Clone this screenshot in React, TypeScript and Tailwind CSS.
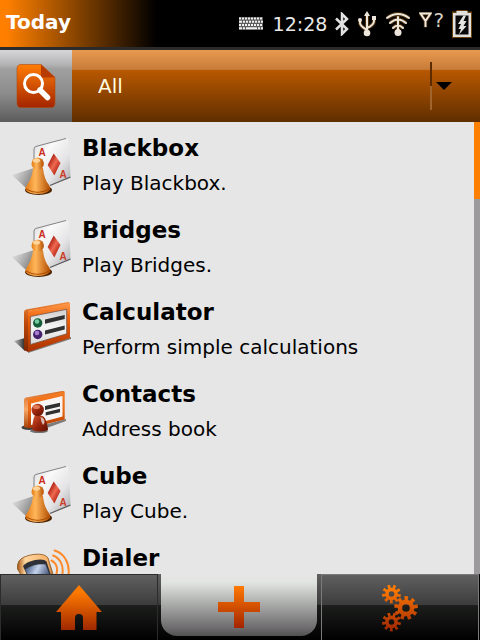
import React from 'react';

interface IconProps {
  className?: string;
}

interface AppEntry {
  name: string;
  description?: string;
  Icon: React.FC<IconProps>;
}

const GamesIcon: React.FC<IconProps> = ({ className }) => (
  <svg viewBox="0 0 64 64" className={className} aria-hidden="true">
    <defs>
      <linearGradient id="games-card" x1="0" y1="0" x2="1" y2="1">
        <stop offset="0" stopColor="#d6d6d8" />
        <stop offset="0.3" stopColor="#fafafa" />
        <stop offset="0.65" stopColor="#e4e4e6" />
        <stop offset="1" stopColor="#a9a9ad" />
      </linearGradient>
      <linearGradient id="games-pawn" x1="0" y1="0" x2="1" y2="0">
        <stop offset="0" stopColor="#e27a14" />
        <stop offset="0.4" stopColor="#ffb65a" />
        <stop offset="1" stopColor="#b14c00" />
      </linearGradient>
      <linearGradient id="games-diamond" x1="0" y1="0" x2="1" y2="1">
        <stop offset="0.2" stopColor="#a81c10" />
        <stop offset="0.5" stopColor="#ee6a50" />
        <stop offset="0.8" stopColor="#b42414" />
      </linearGradient>
      <linearGradient id="games-shadow" x1="0" y1="0" x2="1" y2="0.5">
        <stop offset="0" stopColor="#777" stopOpacity="0" />
        <stop offset="1" stopColor="#555" stopOpacity="0.7" />
      </linearGradient>
    </defs>
    <path d="M2 44L24 37V54L17 58Z" fill="url(#games-shadow)" />
    <path d="M24 18Q24 16 26 15.400L56 7.500Q59 7 59 10L60.500 45Q60.500 47 58 48L40 54L25 52Z" fill="url(#games-card)" />
    <path d="M24 34V18Q24 16 26 15.400L56 7.500" fill="none" stroke="#77777a" strokeWidth="0.900" />
    <path d="M60.500 46L40 54.500" stroke="#55555a" strokeWidth="1.200" />
    <path d="M43.700 22.500L50.500 32L44.300 44.500L37.700 34Z" fill="url(#games-diamond)" />
    <text x="28.500" y="24.500" fontSize="10" fontWeight="700" fontFamily="Liberation Sans, sans-serif" fill="#cb2c18">A</text>
    <text x="49.500" y="47" fontSize="10" fontWeight="700" fontFamily="Liberation Sans, sans-serif" fill="#cb3c28">A</text>
    <ellipse cx="28.500" cy="59" rx="13.500" ry="5" fill="#4a2400" />
    <path d="M23 37H33Q34 48 39 54Q41 57 40 59Q36 63 28 63Q19 63 15.500 59Q15 57 17 54Q22 47 23 37Z" fill="url(#games-pawn)" />
    <path d="M16 58Q28 65 40 57.500" fill="none" stroke="#a44600" strokeWidth="0.900" />
    <circle cx="27.700" cy="32.700" r="6.200" fill="url(#games-pawn)" />
    <ellipse cx="26.500" cy="29.500" rx="3.600" ry="2" fill="#ffe0b0" opacity="0.800" />
  </svg>
);

const CalculatorIcon: React.FC<IconProps> = ({ className }) => (
  <svg viewBox="0 0 64 64" className={className} aria-hidden="true">
    <defs>
      <linearGradient id="calc-frame" x1="0" y1="0" x2="0" y2="1">
        <stop offset="0" stopColor="#ff9a4c" />
        <stop offset="0.3" stopColor="#f0640c" />
        <stop offset="1" stopColor="#a83000" />
      </linearGradient>
      <linearGradient id="calc-side" x1="0" y1="0" x2="0" y2="1">
        <stop offset="0" stopColor="#f08a3c" />
        <stop offset="0.4" stopColor="#c04c0c" />
        <stop offset="1" stopColor="#7c2400" />
      </linearGradient>
      <linearGradient id="calc-panel" x1="0" y1="0" x2="0" y2="1">
        <stop offset="0" stopColor="#cfcfcf" />
        <stop offset="0.5" stopColor="#f4f4f4" />
        <stop offset="1" stopColor="#d8d8d8" />
      </linearGradient>
      <linearGradient id="calc-shadow" x1="0" y1="0" x2="1" y2="0">
        <stop offset="0" stopColor="#555" stopOpacity="0.300" />
        <stop offset="1" stopColor="#222" />
      </linearGradient>
    </defs>
    <path d="M4 46L15 43V56Z" fill="url(#calc-shadow)" />
    <path d="M18 58L61 44V42L18 55Z" fill="#333" opacity="0.600" />
    <path d="M14 17Q14 15 16 14.500L58 7Q60 7 60 9L18 16V57L14 55Z" fill="url(#calc-side)" />
    <path d="M18 16L60 8V43L18 57Z" fill="url(#calc-frame)" />
    <path d="M20.500 21.500L56.700 14.300V38.800L20.500 49.500Z" fill="url(#calc-panel)" stroke="#77564a" strokeWidth="0.800" />
    <circle cx="27.700" cy="28" r="4.700" fill="#155c38" />
    <circle cx="27" cy="26.500" r="2.300" fill="#74cba0" />
    <circle cx="27.700" cy="39.500" r="4.700" fill="#46206c" />
    <circle cx="27" cy="38" r="2.300" fill="#a57cd0" />
    <path d="M35 24.500L54.700 20V24L35 28.700ZM35 35.500L54.700 30.500V34.600L35 39.500Z" fill="#303030" />
  </svg>
);

const ContactsIcon: React.FC<IconProps> = ({ className }) => (
  <svg viewBox="0 0 64 64" className={className} aria-hidden="true">
    <defs>
      <linearGradient id="contacts-frame" x1="0" y1="0" x2="0" y2="1">
        <stop offset="0" stopColor="#f47c22" />
        <stop offset="0.5" stopColor="#ee6a14" />
        <stop offset="1" stopColor="#a93600" />
      </linearGradient>
      <linearGradient id="contacts-side" x1="0" y1="0" x2="0" y2="1">
        <stop offset="0" stopColor="#d66a20" />
        <stop offset="0.5" stopColor="#f7a868" />
        <stop offset="1" stopColor="#a64208" />
      </linearGradient>
      <linearGradient id="contacts-person" x1="0" y1="0" x2="1" y2="1">
        <stop offset="0" stopColor="#d4542c" />
        <stop offset="0.5" stopColor="#98240c" />
        <stop offset="1" stopColor="#5c1000" />
      </linearGradient>
    </defs>
    <ellipse cx="19" cy="50.500" rx="7.500" ry="2.500" fill="#222" opacity="0.850" />
    <path d="M34 52L56 44V42L34 48Z" fill="#333" opacity="0.600" />
    <path d="M14 23Q14 21 16 20.500L52 14Q54.500 14 54.500 15L18 24V51L14 50Z" fill="url(#contacts-side)" />
    <path d="M18 22.500L54.700 14.500V42.500L18 51.500Z" fill="url(#contacts-frame)" />
    <path d="M21 26.500L52.500 19V39.500L21 48Z" fill="#f7f5f3" />
    <path d="M35 29L50 25.800V29.500L35 33ZM35.700 35.200L50 31.700V35.200L35.700 38.500Z" fill="#303030" />
    <ellipse cx="29" cy="54" rx="9" ry="2" fill="#222" opacity="0.600" />
    <path d="M25 38Q35 37 36 44Q38 50 38 53Q30 56 22.500 53V47Q23 42 25 38Z" fill="url(#contacts-person)" />
    <path d="M30.500 40Q35 41 34.500 46L33 48Q31 45 30.500 40Z" fill="#e6d4cc" opacity="0.850" />
    <circle cx="27.700" cy="33" r="6.200" fill="url(#contacts-person)" />
    <ellipse cx="26.500" cy="30" rx="3.500" ry="2" fill="#ef8c66" opacity="0.800" />
  </svg>
);

const DialerIcon: React.FC<IconProps> = ({ className }) => (
  <svg viewBox="0 0 64 64" className={className} aria-hidden="true">
    <defs>
      <linearGradient id="dialer-body" x1="0" y1="0" x2="1" y2="0">
        <stop offset="0" stopColor="#a45410" />
        <stop offset="0.2" stopColor="#ffd6a0" />
        <stop offset="0.75" stopColor="#f5b46c" />
        <stop offset="1" stopColor="#8a4a14" />
      </linearGradient>
      <linearGradient id="dialer-screen" x1="0" y1="0" x2="1" y2="0.4">
        <stop offset="0" stopColor="#2c4470" />
        <stop offset="0.45" stopColor="#c4d2ea" />
        <stop offset="1" stopColor="#22345c" />
      </linearGradient>
    </defs>
    <path d="M9 20Q12 15.500 23 13.500Q35 12 38 17L47 46Q40 56 24 56L7.500 28Q7 23 9 20Z" fill="url(#dialer-body)" stroke="#8a5018" strokeWidth="0.800" />
    <path d="M13 25Q16 21 25 19Q34 17.500 36.500 20.500L44 44L24 50Z" fill="#2e3038" />
    <path d="M15 28.500Q24 22.500 35.500 23.500L43 42L24 46Z" fill="url(#dialer-screen)" />
    <g fill="none" stroke="#ff8a2a" strokeWidth="2" strokeLinecap="round">
      <path d="M44.500 9.500C54 12 60 22 58.500 34" />
      <path d="M43 14.500C50 17 54.500 25 52 35" />
      <path d="M41.500 19.500C46.500 22 48.500 28 46 34" />
    </g>
  </svg>
);

const SearchDocIcon: React.FC<IconProps> = ({ className }) => (
  <svg viewBox="0 0 40 44" className={className} aria-hidden="true">
    <defs>
      <linearGradient id="search-page" x1="0" y1="0" x2="0" y2="1">
        <stop offset="0" stopColor="#ff7d05" />
        <stop offset="1" stopColor="#a32400" />
      </linearGradient>
    </defs>
    <path d="M5 0.500H25L39 13.500V39Q39 43.500 35 43.500H5Q1 43.500 1 39V5Q1 0.500 5 0.500Z" fill="url(#search-page)" stroke="#b04a10" strokeWidth="0.600" />
    <path d="M25 0.500L39 13.500H25Z" fill="#b83c00" />
    <circle cx="17.500" cy="19.500" r="9" fill="none" stroke="#fff" strokeWidth="3" />
    <path d="M24 26L31.500 33.500" stroke="#fff" strokeWidth="5.500" strokeLinecap="round" />
  </svg>
);

const HomeIcon: React.FC<IconProps> = ({ className }) => (
  <svg viewBox="0 0 46 46" className={className} aria-hidden="true">
    <defs>
      <linearGradient id="home-fill" x1="0" y1="0" x2="0" y2="1">
        <stop offset="0.15" stopColor="#ff7a00" />
        <stop offset="1" stopColor="#a02800" />
      </linearGradient>
    </defs>
    <path d="M23 0L46 27H40.500V45H27V33Q27 29 23 29Q19 29 19 33V45H5V27H0Z" fill="url(#home-fill)" />
  </svg>
);

const PlusIcon: React.FC<IconProps> = ({ className }) => (
  <svg viewBox="0 0 42 42" className={className} aria-hidden="true">
    <defs>
      <linearGradient id="plus-fill" x1="0" y1="0" x2="0" y2="1">
        <stop offset="0" stopColor="#ff7a00" />
        <stop offset="1" stopColor="#a32400" />
      </linearGradient>
    </defs>
    <path d="M16 0H26V16H42V26H26V42H16V26H0V16H16Z" fill="url(#plus-fill)" />
  </svg>
);

// Builds a toothed wheel outline with a round hole in it
const gearPath = (cx: number, cy: number, outer: number, inner: number, hole: number, turn: number) => {
  const teeth = 9;
  const points: string[] = [];
  for (let i = 0; i < teeth; i++) {
    const mid = turn + (i * 2 * Math.PI) / teeth;
    [[-0.2, inner], [-0.16, outer], [0.16, outer], [0.2, inner]].forEach(([offset, r]) => {
      points.push(`${(cx + r * Math.cos(mid + offset)).toFixed(2)} ${(cy + r * Math.sin(mid + offset)).toFixed(2)}`);
    });
  }
  return `M${points.join('L')}ZM${cx - hole} ${cy}a${hole} ${hole} 0 1 0 ${hole * 2} 0a${hole} ${hole} 0 1 0 ${-hole * 2} 0Z`;
};

const GearsIcon: React.FC<IconProps> = ({ className }) => (
  <svg viewBox="0 0 36 48" className={className} aria-hidden="true">
    <defs>
      <linearGradient id="gears-fill" gradientUnits="userSpaceOnUse" x1="0" y1="0" x2="0" y2="48">
        <stop offset="0.1" stopColor="#ff7a00" />
        <stop offset="1" stopColor="#9c2400" />
      </linearGradient>
    </defs>
    <g fill="url(#gears-fill)" fillRule="evenodd">
      <path d={gearPath(9.5, 10, 9.5, 6.3, 2.8, 0.2)} />
      <path d={gearPath(24, 24, 12, 8.3, 3.8, -0.15)} />
      <path d={gearPath(9.5, 38, 9.5, 6.3, 2.8, 0.2)} />
    </g>
  </svg>
);

const KeyboardIcon: React.FC<IconProps> = ({ className }) => (
  <svg viewBox="0 0 24 13" className={className} aria-hidden="true">
    <path d="M0 0H24V13H0Z" fill="#5c5c5c" />
    <g fill="none" stroke="#f0f0f0" strokeWidth="2">
      <path d="M0 1.500H24" strokeDasharray="2 1" />
      <path d="M0 4.700H24" strokeDasharray="3 1 2 1 2 1 2 1 2 1 2 1 2 1 2" />
      <path d="M0 7.900H24" strokeDasharray="2 1" />
      <path d="M0 11.200H24" strokeDasharray="3 1 2 1 11 1 2 1 2" />
    </g>
  </svg>
);

const BluetoothIcon: React.FC<IconProps> = ({ className }) => (
  <svg viewBox="0 0 14 24" className={className} aria-hidden="true">
    <path d="M1 6.500L12 17L7 22V2L12 7L1 17.500" fill="none" stroke="#e2e2e2" strokeWidth="2.500" />
  </svg>
);

const UsbIcon: React.FC<IconProps> = ({ className }) => (
  <svg viewBox="0 0 20 26" className={className} aria-hidden="true">
    <g fill="none" stroke="#6a4210" strokeWidth="4" opacity="0.700">
      <path d="M10 2V22M3 9V12Q3 15 10 19M17 6V10Q17 14 10 17" />
    </g>
    <g fill="none" stroke="#ece6dc" strokeWidth="2">
      <path d="M10 3V22M3 9V12Q3 15 10 19M17 6V10Q17 14 10 17" />
    </g>
    <path d="M10 0L13 5H7ZM15 5H19V9H15Z" fill="#ece6dc" />
    <circle cx="3" cy="9" r="2" fill="#ece6dc" />
    <circle cx="10" cy="22" r="3.300" fill="#ece6dc" />
  </svg>
);

const WifiIcon: React.FC<IconProps> = ({ className }) => (
  <svg viewBox="0 0 26 26" className={className} aria-hidden="true">
    <g fill="none" stroke="#6a4210" strokeWidth="4" opacity="0.700">
      <path d="M2 7Q13 -1 24 7M5 12Q13 5 21 12M8 17Q13 12 18 17M13 5V20" />
    </g>
    <g fill="none" stroke="#ece6dc" strokeWidth="2" strokeLinecap="round">
      <path d="M2 7Q13 -1 24 7M5 12Q13 5 21 12M8 17Q13 12 18 17M13 6V20" />
    </g>
    <circle cx="13" cy="21.500" r="3.500" fill="#ece6dc" />
  </svg>
);

const AntennaIcon: React.FC<IconProps> = ({ className }) => (
  <svg viewBox="0 0 13 16" className={className} aria-hidden="true">
    <path d="M1.500 1.500H11.500L6.500 9ZM6.500 9V15.500" fill="none" stroke="#6a4210" strokeWidth="3.500" opacity="0.700" />
    <path d="M1.500 1.500H11.500L6.500 9ZM6.500 8V15" fill="none" stroke="#f0eae0" strokeWidth="1.900" />
  </svg>
);

const BatteryIcon: React.FC<IconProps> = ({ className }) => (
  <svg viewBox="0 0 20 28" className={className} aria-hidden="true">
    <path d="M6 1.500H14V3H18.500V26.500H1.500V3H6Z" fill="none" stroke="#6a4210" strokeWidth="3" />
    <path d="M4.500 1H15.500V3H19V27H1V3H4.500Z" fill="#e2e0dc" />
    <path d="M3.500 5.500H16.500V24.500H3.500Z" fill="#080808" />
    <path d="M11.500 5.500L6 14H9L6.500 19H9L7 24.500L14.500 16H11.500L14.500 11H11.500L14 5.500Z" fill="#e6e4e0" />
  </svg>
);

const APPS: AppEntry[] = [
  { name: 'Blackbox', description: 'Play Blackbox.', Icon: GamesIcon },
  { name: 'Bridges', description: 'Play Bridges.', Icon: GamesIcon },
  { name: 'Calculator', description: 'Perform simple calculations', Icon: CalculatorIcon },
  { name: 'Contacts', description: 'Address book', Icon: ContactsIcon },
  { name: 'Cube', description: 'Play Cube.', Icon: GamesIcon },
  { name: 'Dialer', Icon: DialerIcon },
];

const StatusBar = () => (
  <header className="flex h-[50px] shrink-0 items-center justify-between border-b-3 border-[#2b2b2b] bg-black bg-[linear-gradient(90deg,#ff8000_0px,#ff8000_6px,#000_156px)] pr-2 pl-1.5 text-white">
    <h1 className="pb-1 text-[20px] leading-6 font-bold">Today</h1>
    <div className="flex items-center">
      <KeyboardIcon className="mr-2.5 h-[13px] w-6" />
      <time className="mr-2 text-[19px] leading-6 text-[#e8e8e8]">12:28</time>
      <BluetoothIcon className="mr-2 h-6 w-3.5" />
      <UsbIcon className="mr-2 h-[26px] w-5" />
      <WifiIcon className="mr-2 h-[26px] w-[26px]" />
      <div className="mr-2 flex items-center gap-px pb-2">
        <AntennaIcon className="h-4 w-[13px]" />
        <span className="text-[20px] leading-5 text-[#d8d0c4]">?</span>
      </div>
      <BatteryIcon className="h-7 w-5" />
    </div>
  </header>
);

const FilterBar = () => (
  <div className="flex h-[72px] shrink-0">
    <button
      aria-label="Search"
      className="flex w-[72px] shrink-0 items-center justify-center bg-[linear-gradient(#d6d6d8_0%,#b4b4b6_20%,#a0a0a0_26%,#8c8c8c_60%,#5c5c5c_100%)]"
    >
      <SearchDocIcon className="h-11 w-10" />
    </button>
    <div className="relative flex-1 bg-[linear-gradient(#e89a50_0%,#c87c38_27%,#b85800_28%,#602e00_100%)]">
      <select aria-label="Category" className="h-full w-full appearance-none pl-[26px] text-[20px] text-[#fffbe0] outline-none">
        <option>All</option>
      </select>
      <div className="pointer-events-none absolute inset-y-0 right-7 flex items-center gap-1">
        <div className="h-12 w-0.5 bg-[linear-gradient(#5c2c00_50%,#a0642c_50%)]" />
        <svg viewBox="0 0 16 8" className="h-2 w-4" aria-hidden="true">
          <path d="M0 0H16L8 8Z" fill="#000" />
        </svg>
      </div>
    </div>
  </div>
);

const AppList = () => (
  <main className="flex min-h-0 flex-1">
    <ul className="min-w-0 flex-1 overflow-hidden">
      {APPS.map(({ name, description, Icon }) => (
        <li key={name} className="flex h-[82px] items-start gap-2 pt-[9px] pl-2.5">
          <Icon className="h-16 w-16 shrink-0" />
          <div>
            <h2 className="text-[23px] leading-[35px] font-bold">{name}</h2>
            {description && <p className="text-[20px] leading-[35px]">{description}</p>}
          </div>
        </li>
      ))}
    </ul>
    <div className="w-1.5 shrink-0 bg-[#9c9a9c]">
      <div className="h-[17%] bg-[#ff8000]" />
    </div>
  </main>
);

const TabBar = () => (
  <nav className="flex h-[66px] shrink-0 bg-black pr-px">
    <button
      aria-label="Home"
      className="flex flex-1 items-center justify-center border border-b-0 border-[#2c2c2c] bg-[linear-gradient(#606060_0%,#3c3c3c_46%,#1c1e1c_47%,#000_100%)]"
    >
      <HomeIcon className="size-[46px]" />
    </button>
    <div className="flex flex-1 bg-[linear-gradient(#606060_0%,#3c3c3c_46%,#1c1e1c_47%,#000_100%)] pr-1 pb-1 pl-[3px]">
      <button
        aria-label="Applications"
        className="flex flex-1 items-center justify-center rounded-b-2xl bg-[linear-gradient(#e6e6e6_0%,#e0e4e0_14%,#6c6a6c_88%,#505050_100%)] pt-1"
      >
        <PlusIcon className="size-[42px]" />
      </button>
    </div>
    <button
      aria-label="Settings"
      className="flex flex-1 items-center justify-center border border-b-0 border-[#7a7a7a] bg-[linear-gradient(#606060_0%,#3c3c3c_46%,#1c1e1c_47%,#000_100%)]"
    >
      <GearsIcon className="h-12 w-9" />
    </button>
  </nav>
);

const App: React.FC = () => {
  return (
    <div className="flex h-screen flex-col overflow-hidden bg-[#e6e6e6] font-['DejaVu_Sans',sans-serif] text-black">
      <StatusBar />
      <FilterBar />
      <AppList />
      <TabBar />
    </div>
  );
};

export default App;
